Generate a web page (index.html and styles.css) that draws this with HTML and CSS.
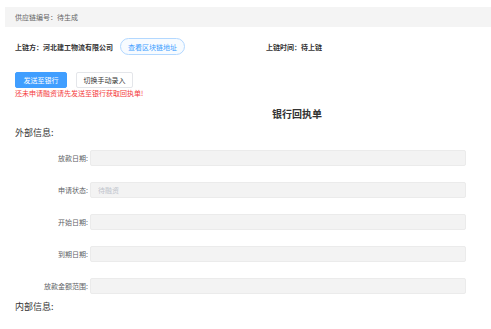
FILE: index.html
```html
<!DOCTYPE html>
<html lang="zh-CN">
<head>
  <meta charset="UTF-8">
  <meta name="viewport" content="width=device-width, initial-scale=1.0">
  <title>银行回执单</title>
  <link rel="stylesheet" href="styles.css">
</head>
<body>
  <div class="chain-bar">供应链编号：待生成</div>

  <div class="chain-info">
    <div class="chain-left">
      <span class="strong">上链方：河北建工物流有限公司</span>
      <button class="btn-pill">查看区块链地址</button>
    </div>
    <span class="strong">上链时间：待上链</span>
  </div>

  <div class="actions">
    <button class="btn btn-primary">发送至银行</button>
    <button class="btn btn-default">切换手动录入</button>
  </div>
  <div class="tip">还未申请融资请先发送至银行获取回执单!</div>

  <div class="receipt-title">银行回执单</div>

  <div class="section-title">外部信息:</div>
  <div class="form">
    <div class="form-row">
      <label>放款日期:</label>
      <input type="text" class="field">
    </div>
    <div class="form-row">
      <label>申请状态:</label>
      <input type="text" class="field" placeholder="待融资">
    </div>
    <div class="form-row">
      <label>开始日期:</label>
      <input type="text" class="field">
    </div>
    <div class="form-row">
      <label>到期日期:</label>
      <input type="text" class="field">
    </div>
    <div class="form-row">
      <label>放款金额范围:</label>
      <input type="text" class="field">
    </div>
  </div>

  <div class="section-title section-inner">内部信息:</div>
</body>
</html>
```

FILE: styles.css
```css
body {
  margin: 0;
  font-family: "Noto Sans CJK SC", "Noto Sans", sans-serif;
  color: #333;
  background: #fff;
}

.chain-bar {
  margin: 7px 0 0 5px;
  height: 20px;
  padding-left: 10px;
  display: flex;
  align-items: center;
  background-color: #f4f4f4;
  font-size: 7px;
  color: #666;
}

.chain-info {
  display: flex;
  align-items: center;
  height: 17px;
  margin-top: 11px;
  padding-left: 15px;
  font-size: 7px;
}

.chain-left {
  width: 251px;
  display: flex;
  align-items: center;
}

.strong {
  font-weight: bold;
  color: #333;
}

.btn-pill {
  margin-left: 7px;
  width: 65px;
  height: 17px;
  padding: 0;
  border: 1px solid #b3d8ff;
  border-radius: 9px;
  background-color: #f7fbff;
  color: #409eff;
  font-family: inherit;
  font-size: 7px;
  cursor: pointer;
}

.actions {
  display: flex;
  gap: 9px;
  margin-top: 17px;
  padding-left: 15px;
}

.btn {
  height: 16px;
  padding: 0;
  border-radius: 2px;
  font-family: inherit;
  font-size: 7px;
  cursor: pointer;
}

.btn-primary {
  width: 52px;
  border: 1px solid #409eff;
  background-color: #409eff;
  color: #fff;
}

.btn-default {
  width: 57px;
  border: 1px solid #e4e6ea;
  background-color: #fff;
  color: #333;
}

.tip {
  padding-left: 15px;
  height: 10px;
  line-height: 10px;
  font-size: 7px;
  color: #f43b3b;
}

.receipt-title {
  margin: 9px 0 0 272px;
  height: 14px;
  line-height: 14px;
  font-size: 10px;
  font-weight: bold;
  color: #333;
}

.section-title {
  margin-top: 6px;
  padding-left: 15px;
  height: 12px;
  line-height: 12px;
  font-size: 9px;
  color: #333;
}

.section-inner {
  margin-top: 7px;
}

.form {
  display: flex;
  flex-direction: column;
  gap: 16px;
  margin-top: 11px;
}

.form-row {
  display: grid;
  grid-template-columns: 88px 376px;
  column-gap: 2px;
  align-items: center;
}

.form-row label {
  text-align: right;
  font-size: 7px;
  color: #606266;
}

.field {
  box-sizing: border-box;
  height: 16px;
  margin: 0;
  padding: 0 7px;
  border: 1px solid #ebebeb;
  border-radius: 2px;
  background-color: #f3f3f3;
  font-family: inherit;
  font-size: 7px;
  color: #606266;
}

.field::placeholder {
  color: #c0c4cc;
}
```
